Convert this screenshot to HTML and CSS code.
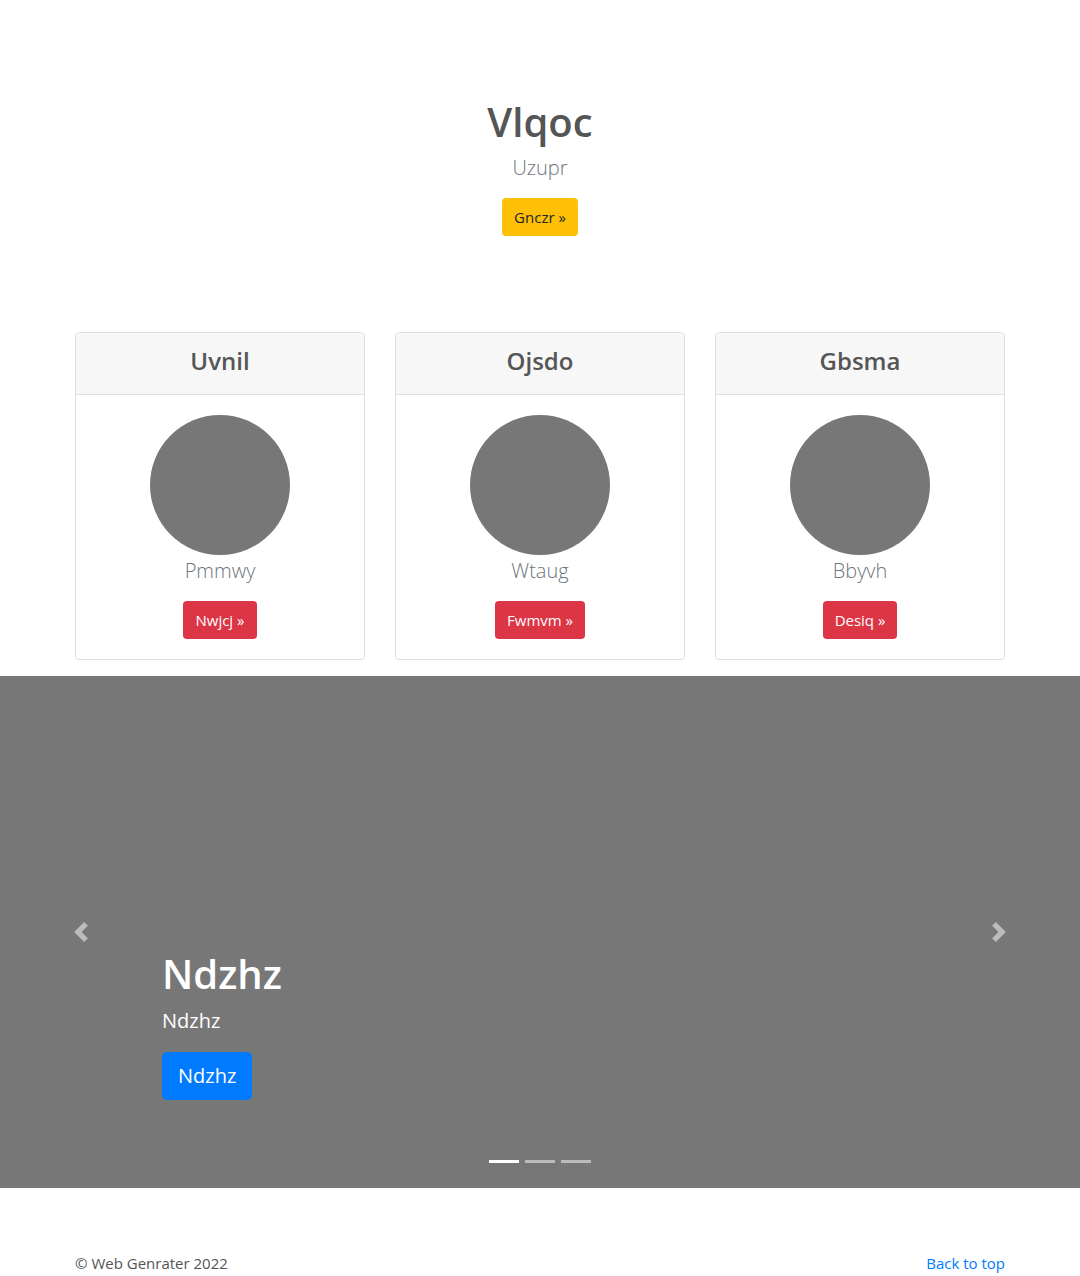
FILE: index.html
```html
<!DOCTYPE html>
<html lang="en">
<head>
<meta charset="utf-8">
<title>Vlqoc</title>
<link rel="stylesheet" href="styles.css">
</head>
<body>
<header class="hero">
  <h1 class="hero-title">Vlqoc</h1>
  <p class="lead">Uzupr</p>
  <a class="btn btn-warning" href="#">Gnczr &raquo;</a>
</header>

<section class="container cards">
  <div class="card">
    <div class="card-header"><h4>Uvnil</h4></div>
    <div class="card-body">
      <div class="avatar"></div>
      <p class="lead">Pmmwy</p>
      <a class="btn btn-danger" href="#">Nwjcj &raquo;</a>
    </div>
  </div>
  <div class="card">
    <div class="card-header"><h4>Ojsdo</h4></div>
    <div class="card-body">
      <div class="avatar"></div>
      <p class="lead">Wtaug</p>
      <a class="btn btn-danger" href="#">Fwmvm &raquo;</a>
    </div>
  </div>
  <div class="card">
    <div class="card-header"><h4>Gbsma</h4></div>
    <div class="card-body">
      <div class="avatar"></div>
      <p class="lead">Bbyvh</p>
      <a class="btn btn-danger" href="#">Desiq &raquo;</a>
    </div>
  </div>
</section>

<section class="carousel">
  <a class="carousel-control prev" href="#"><svg width="20" height="20" viewBox="0 0 8 8"><path fill="#fff" d="M5.25 0l-4 4 4 4 1.5-1.5L4.25 4l2.5-2.5L5.25 0z"/></svg></a>
  <div class="carousel-caption">
    <h1>Ndzhz</h1>
    <p class="caption-text">Ndzhz</p>
    <p><a class="btn btn-lg btn-primary" href="#">Ndzhz</a></p>
  </div>
  <a class="carousel-control next" href="#"><svg width="20" height="20" viewBox="0 0 8 8"><path fill="#fff" d="M2.75 0l-1.5 1.5L3.75 4l-2.5 2.5L2.75 8l4-4-4-4z"/></svg></a>
  <ol class="indicators">
    <li class="active"></li>
    <li></li>
    <li></li>
  </ol>
</section>

<footer class="container footer">
  <p>&copy; Web Genrater 2022</p>
  <a href="#">Back to top</a>
</footer>
</body>
</html>
```

FILE: styles.css
```css
* { box-sizing: border-box; }
html, body { margin: 0; padding: 0; }
body {
  font-family: "Segoe UI", "Open Sans", "Liberation Sans", sans-serif;
  font-size: 15px;
  line-height: 1.5;
  color: #555;
  background: #fff;
}
h1, h4, p { margin: 0; }
a { text-decoration: none; }

.container {
  width: 960px;
  margin: 0 auto;
  padding: 0 15px;
}

.hero {
  padding-top: 98px;
  text-align: center;
}
.hero-title {
  font-size: 40px;
  font-weight: 600;
  line-height: 1.2;
  color: #555;
}
.lead {
  font-size: 20px;
  font-weight: 300;
  color: #6c757d;
  margin-top: 7px;
}

.btn {
  display: inline-block;
  border-radius: 4px;
  font-size: 15px;
  line-height: 21px;
  padding: 8.5px 12px;
  font-weight: 400;
}
.btn-warning { background: #ffc107; color: #212529; margin-top: 15px; }
.btn-danger { background: #dc3545; color: #fff; margin-top: 15px; }
.btn-primary { background: #007bff; color: #fff; }
.btn-lg { font-size: 20px; line-height: 30px; padding: 9px 16px; border-radius: 5px; }

.cards {
  display: grid;
  grid-template-columns: repeat(3, 1fr);
  gap: 30px;
  margin-top: 96px;
}
.card {
  border: 1px solid #dfdfdf;
  border-radius: 4px;
  text-align: center;
  overflow: hidden;
}
.card-header {
  background: #f7f7f7;
  border-bottom: 1px solid #dfdfdf;
  height: 62px;
  display: flex;
  align-items: center;
  justify-content: center;
}
.card-header h4 {
  font-size: 24px;
  font-weight: 600;
  line-height: 1.2;
  color: #555;
  margin-top: -4px;
}
.card-body {
  padding: 20px 20px 20px;
  display: flex;
  flex-direction: column;
  align-items: center;
}
.avatar {
  width: 140px;
  height: 140px;
  border-radius: 50%;
  background: #777;
}
.card-body .lead { margin-top: 1px; }

.carousel {
  position: relative;
  margin-top: 16px;
  height: 512px;
  background: #777;
}
.carousel-control {
  position: absolute;
  top: 0;
  bottom: 0;
  width: 15%;
  display: flex;
  align-items: center;
  justify-content: center;
  opacity: .5;
}
.carousel-control.prev { left: 0; }
.carousel-control.next { right: 0; }
.carousel-caption {
  position: absolute;
  left: 15%;
  right: 15%;
  bottom: 48px;
  padding: 20px 0 40px;
  color: #fff;
}
.carousel-caption h1 {
  font-size: 40px;
  font-weight: 600;
  line-height: 1.2;
  margin-bottom: 8px;
}
.caption-text {
  font-size: 20px;
  line-height: 30px;
  margin-bottom: 16px;
}
.indicators {
  position: absolute;
  left: 0;
  right: 0;
  bottom: 25px;
  margin: 0;
  padding: 0;
  list-style: none;
  display: flex;
  justify-content: center;
  gap: 6px;
}
.indicators li {
  width: 30px;
  height: 3px;
  background: #fff;
  opacity: .5;
}
.indicators li.active { opacity: 1; }

.footer {
  display: flex;
  justify-content: space-between;
  align-items: center;
  padding-top: 64px;
  padding-bottom: 0;
}
.footer p { color: #555; }
.footer a { color: #007bff; }
```
